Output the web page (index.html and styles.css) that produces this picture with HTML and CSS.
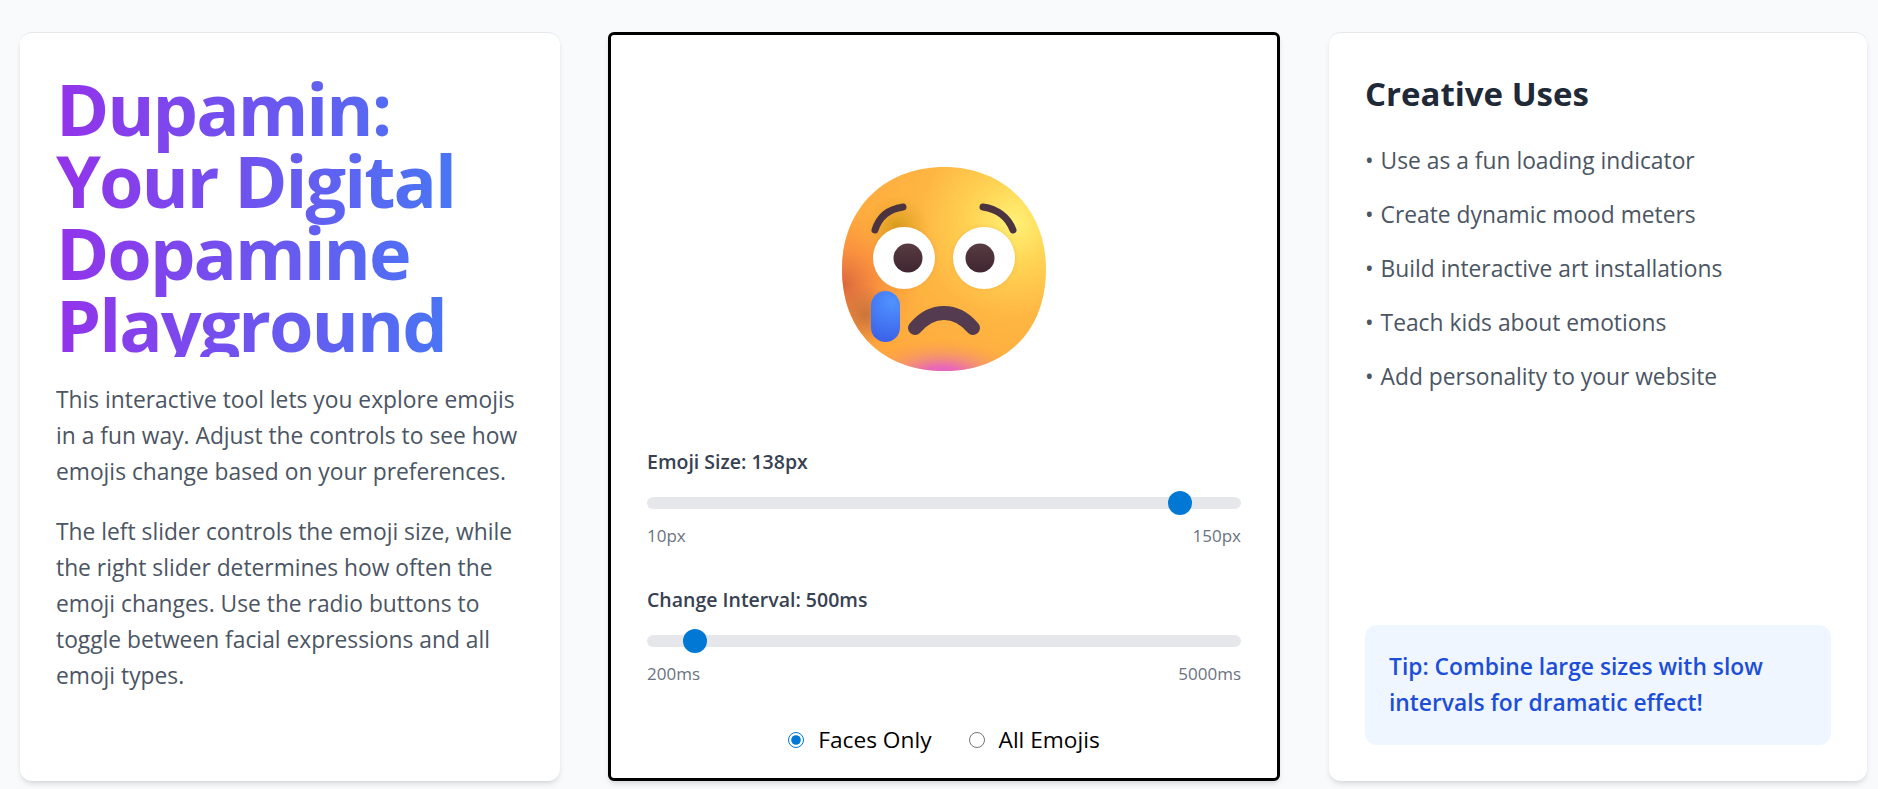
FILE: index.html
```html
<!DOCTYPE html>
<html lang="en">
<head>
<meta charset="utf-8">
<title>Dupamin</title>
<link rel="stylesheet" href="styles.css">
</head>
<body>
<main class="layout">
  <section class="card intro">
    <h1 class="title">Dupamin:<br>Your Digital<br>Dopamine<br>Playground</h1>
    <p class="copy">This interactive tool lets you explore emojis in a fun way. Adjust the controls to see how emojis change based on your preferences.</p>
    <p class="copy">The left slider controls the emoji size, while the right slider determines how often the emoji changes. Use the radio buttons to toggle between facial expressions and all emoji types.</p>
  </section>

  <section class="card playground">
    <div class="stage">
      <svg class="emoji" width="204" height="204" viewBox="0 0 204 204" role="img" aria-label="Crying face">
        <defs>
          <clipPath id="faceClip"><path d="M102 0C162 0 204 42 204 102C204 166 162 204 102 204C42 204 0 166 0 102C0 42 42 0 102 0Z"/></clipPath>
          <radialGradient id="base" gradientUnits="userSpaceOnUse" cx="172" cy="56" r="190">
            <stop offset="0" stop-color="#fff176"/>
            <stop offset=".22" stop-color="#ffd454"/>
            <stop offset=".5" stop-color="#feb642"/>
            <stop offset="1" stop-color="#ffa63c"/>
          </radialGradient>
          <radialGradient id="left" gradientUnits="userSpaceOnUse" cx="0" cy="118" r="78">
            <stop offset="0" stop-color="#d9653f"/>
            <stop offset=".45" stop-color="#f7883f" stop-opacity=".75"/>
            <stop offset="1" stop-color="#ff9a3c" stop-opacity="0"/>
          </radialGradient>
          <radialGradient id="pink" gradientUnits="userSpaceOnUse" cx="0" cy="0" r="40" gradientTransform="translate(100 212) scale(2 1)">
            <stop offset="0" stop-color="#e060d8"/>
            <stop offset=".3" stop-color="#e868b8"/>
            <stop offset=".65" stop-color="#f08a80" stop-opacity=".5"/>
            <stop offset="1" stop-color="#ff9a50" stop-opacity="0"/>
          </radialGradient>
          <radialGradient id="brow" gradientUnits="userSpaceOnUse" cx="55" cy="60" r="32">
            <stop offset="0" stop-color="#c8930e" stop-opacity=".75"/>
            <stop offset="1" stop-color="#d8a020" stop-opacity="0"/>
          </radialGradient>
          <radialGradient id="cheek" gradientUnits="userSpaceOnUse" cx="24" cy="148" r="30">
            <stop offset="0" stop-color="#b5683a" stop-opacity=".7"/>
            <stop offset="1" stop-color="#b5683a" stop-opacity="0"/>
          </radialGradient>
          <linearGradient id="ink" x1="0" y1="0" x2="0" y2="1">
            <stop offset="0" stop-color="#583b42"/>
            <stop offset="1" stop-color="#3f2631"/>
          </linearGradient>
          <radialGradient id="tear" gradientUnits="userSpaceOnUse" cx="50" cy="135" r="42">
            <stop offset="0" stop-color="#5092ff"/>
            <stop offset="1" stop-color="#3a5fe8"/>
          </radialGradient>
          <filter id="soft" x="-30%" y="-30%" width="160%" height="160%"><feGaussianBlur stdDeviation="2"/></filter>
        </defs>
        <g clip-path="url(#faceClip)">
          <rect width="204" height="204" fill="url(#base)"/>
          <rect width="204" height="204" fill="url(#left)"/>
          <rect width="204" height="204" fill="url(#brow)"/>
          <rect width="204" height="204" fill="url(#cheek)"/>
          <rect width="204" height="204" fill="url(#pink)"/>
        </g>
        <g fill="none" stroke="#4b3340" stroke-width="7" stroke-linecap="round">
          <path d="M33 63C37 50 47 42 61 40"/>
          <path d="M141 40C155 42 166 50 171 63"/>
        </g>
        <circle cx="62" cy="91" r="31" fill="#e0903a" opacity=".45" filter="url(#soft)"/>
        <circle cx="142" cy="91" r="31" fill="#e0903a" opacity=".35" filter="url(#soft)"/>
        <circle cx="62" cy="91" r="31" fill="#fff"/>
        <circle cx="142" cy="91" r="31" fill="#fff"/>
        <circle cx="66" cy="91" r="14.5" fill="url(#ink)"/>
        <circle cx="138" cy="91" r="14.5" fill="url(#ink)"/>
        <path d="M73 161C90 141 114 141 131 161" fill="none" stroke="#553b4f" stroke-width="14" stroke-linecap="round"/>
        <rect x="29" y="124" width="29" height="51" rx="14.5" fill="url(#tear)"/>
      </svg>
    </div>

    <div class="control">
      <label class="control-label" for="size">Emoji Size: 138px</label>
      <input class="slider" id="size" type="range" min="10" max="150" value="138">
      <div class="range-ends"><span>10px</span><span>150px</span></div>
    </div>

    <div class="control">
      <label class="control-label" for="interval">Change Interval: 500ms</label>
      <input class="slider" id="interval" type="range" min="200" max="5000" value="500">
      <div class="range-ends"><span>200ms</span><span>5000ms</span></div>
    </div>

    <div class="modes">
      <label class="mode"><input class="radio" type="radio" name="mode" checked>Faces Only</label>
      <label class="mode"><input class="radio" type="radio" name="mode">All Emojis</label>
    </div>
  </section>

  <section class="card uses">
    <h2 class="uses-title">Creative Uses</h2>
    <ul class="uses-list">
      <li><span class="dot">•</span>Use as a fun loading indicator</li>
      <li><span class="dot">•</span>Create dynamic mood meters</li>
      <li><span class="dot">•</span>Build interactive art installations</li>
      <li><span class="dot">•</span>Teach kids about emotions</li>
      <li><span class="dot">•</span>Add personality to your website</li>
    </ul>
    <p class="tip">Tip: Combine large sizes with slow intervals for dramatic effect!</p>
  </section>
</main>
</body>
</html>
```

FILE: styles.css
```css
* { box-sizing: border-box; }

html, body { height: 100%; }

body {
  margin: 0;
  background: #f9fafb;
  font-family: "Open Sans", "Noto Sans", sans-serif;
  font-stretch: 90%;
  overflow: hidden;
}

.layout {
  display: grid;
  grid-template-columns: 540px 672px 539px;
  column-gap: 48px;
  height: 789px;
  padding: 32px 10px 8px 20px;
}

.card {
  display: flex;
  flex-direction: column;
  background: #fff;
  border: 1px solid #e5e7eb;
  border-width: 1px 0 0;
  border-radius: 12px;
  box-shadow: 0 4px 6px -1px rgba(0, 0, 0, .1), 0 2px 4px -2px rgba(0, 0, 0, .1);
  padding: 36px;
}

.title {
  height: 288px;
  margin: 0 0 25px;
  padding-top: 3px;
  font-size: 72px;
  line-height: 72px;
  font-weight: 700;
  letter-spacing: -2px;
  background: linear-gradient(90deg, #9333ea, #3b82f6);
  -webkit-background-clip: text;
  background-clip: text;
  color: transparent;
}

.copy {
  margin: 0 0 24px;
  font-size: 22.8px;
  line-height: 36px;
  color: #4b5563;
}

.playground {
  border: 3px solid #000;
  border-radius: 6px;
  padding: 36px 36px 24px;
}

.stage {
  flex: 1;
  display: flex;
  align-items: center;
  justify-content: center;
  padding-top: 17px;
}

.emoji { display: block; }

.control { margin-bottom: 40px; }

.control-label {
  display: block;
  font-size: 19.5px;
  line-height: 24px;
  font-weight: 600;
  color: #374151;
  margin-bottom: 17px;
}

.slider {
  display: block;
  width: 100%;
  height: 24px;
  margin: 0;
  background: transparent;
  -webkit-appearance: none;
  appearance: none;
}

.slider::-webkit-slider-runnable-track {
  height: 12px;
  border-radius: 6px;
  background: #e5e7eb;
}

.slider::-webkit-slider-thumb {
  -webkit-appearance: none;
  appearance: none;
  width: 24px;
  height: 24px;
  margin-top: -6px;
  border-radius: 50%;
  background: #0078d4;
}

.range-ends {
  display: flex;
  justify-content: space-between;
  margin-top: 9px;
  font-size: 17px;
  line-height: 24px;
  color: #6b7280;
}

.modes {
  display: flex;
  justify-content: center;
  gap: 37px;
  font-size: 22.7px;
  line-height: 28px;
  color: #000;
}

.mode {
  display: flex;
  align-items: center;
  gap: 14px;
}

.radio {
  width: 16px;
  height: 16px;
  margin: 0;
  accent-color: #0078d4;
}

.uses { margin-left: 1px; }

.uses-title {
  margin: 0 0 24px;
  font-size: 33px;
  line-height: 50px;
  font-weight: 700;
  color: #1f2937;
}

.uses-list {
  list-style: none;
  margin: 0;
  padding: 0;
  font-size: 22.8px;
  line-height: 36px;
  color: #4b5563;
}

.uses-list li { margin-bottom: 18px; }

.dot { margin-right: 7px; }

.tip {
  margin: auto 0 0;
  padding: 24px;
  border-radius: 12px;
  background: #eff6ff;
  font-size: 22.8px;
  line-height: 36px;
  font-weight: 600;
  color: #1d4ed8;
}
```
